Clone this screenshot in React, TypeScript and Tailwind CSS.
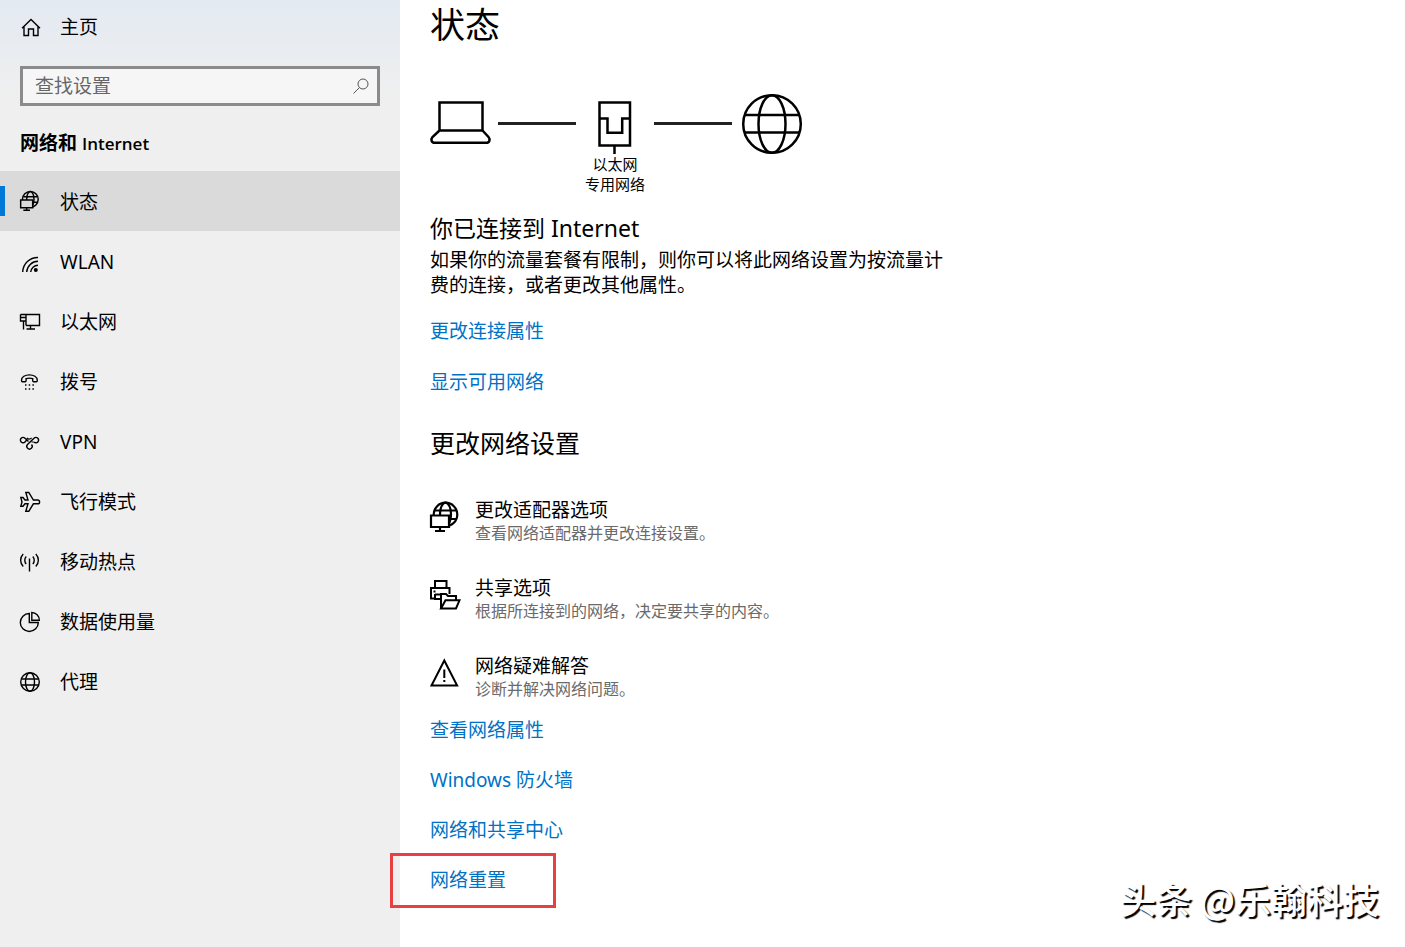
import type { ReactNode } from 'react';

type IconProps = { className?: string; screen?: string };

function Svg({ children, className = 'size-6', width = 1.4, viewBox = '0 0 24 24' }: {
  children: ReactNode;
  className?: string;
  width?: number;
  viewBox?: string;
}) {
  return (
    <svg
      viewBox={viewBox}
      className={`${className} shrink-0 overflow-visible`}
      fill="none"
      stroke="currentColor"
      strokeWidth={width}
      aria-hidden="true"
    >
      {children}
    </svg>
  );
}

function HomeIcon() {
  return (
    <Svg>
      <path d="M4 13.2 13 4.5l9 8.7M6 11.5v9h4.5V14h5v6.500H20v-9" />
    </Svg>
  );
}

function NetworkIcon({ className = 'size-6 p-0.5', screen = '#dadada' }: IconProps) {
  return (
    <Svg className={className} viewBox="0 0 30 30" width={2.2}>
      <circle cx="15.500" cy="12.500" r="11.800" />
      <ellipse cx="15.500" cy="12.500" rx="5.500" ry="11.800" />
      <path d="M5 8.500h21M5 17h21.500" />
      <path d="M1 13.500h18v11.500H1z" fill={screen} />
      <path d="M10 25v4M5 29h10" />
    </Svg>
  );
}

function WlanIcon() {
  return (
    <Svg>
      <path d="M4.700 23A15 15 0 0 1 20 8.500M8.700 23A11.300 11.300 0 0 1 20 12.300M12.700 23A7.500 7.500 0 0 1 20 16.200" />
      <circle cx="17.800" cy="21" r="2" fill="currentColor" stroke="none" />
    </Svg>
  );
}

function EthernetIcon() {
  return (
    <Svg>
      <path d="M2.500 5.500h19v11H8M8 5.500v11M2.500 5.500v6.500H8M2.500 8.500H8M5.500 12v8.500M12.500 16.500V20M8.500 20h8.500" />
    </Svg>
  );
}

function DialIcon() {
  return (
    <Svg>
      <path d="M3.500 11.500c-.4-7.500 16.200-7.500 15.800 0 0 1-.3 1.200-1 1.200h-2.600c-.8 0-1-.4-1-1.200V9.600c-2-.6-4.600-.6-6.600 0v1.900c0 .8-.2 1.200-1 1.200H4.500c-.7 0-1-.2-1-1.200z" />
      <path d="M7 16h1.500M10.700 16h1.500M14.400 16h1.500M7 20h1.500M10.700 20h1.500M14.400 20h1.500" />
    </Svg>
  );
}

function VpnIcon() {
  return (
    <Svg>
      <path d="M10.500 12.500 7 9.200a2.700 2.700 0 1 0 0 3.800c1-1 1.500-2 2.300-3" />
      <path d="M9 8.800c1.200 1.700 3.200 1.700 4.600 0M13.500 13l2.300 0" strokeWidth={1.2} />
      <path d="M13.500 15.500a2.700 2.700 0 1 1-4 0L16 9.200a2.700 2.700 0 1 1 0 3.800" />
    </Svg>
  );
}

function PlaneIcon() {
  return (
    <Svg>
      <path d="M2.800 8.500H5L7 11h3L7.800 3.500h3l4.600 7.500h4.300a1.900 1.900 0 0 1 0 3.800h-4.300l-4.600 7.500h-3L10 14.800H7l-2 2.500H2.800L4 13z" />
    </Svg>
  );
}

function HotspotIcon() {
  return (
    <Svg>
      <path d="M11.500 9.500v13M8.200 7.500c-1.900 2-1.900 5.500 0 7.500M14.800 7.500c1.900 2 1.900 5.500 0 7.500M5.200 5c-3.400 3.500-3.400 9 0 12.500M17.800 5c3.400 3.500 3.400 9 0 12.500" />
    </Svg>
  );
}

function PieIcon() {
  return (
    <Svg>
      <path d="M11.300 4.500a9 9 0 1 0 9 9h-9zM13.800 3.500v7.700h7.500a7.600 7.600 0 0 0-7.500-7.700z" />
    </Svg>
  );
}

function GlobeIcon() {
  return (
    <Svg>
      <circle cx="12" cy="13" r="9.300" />
      <ellipse cx="12" cy="13" rx="4.500" ry="9.300" />
      <path d="M3.300 10h17.400M3.300 16h17.400" />
    </Svg>
  );
}

function ShareIcon() {
  return (
    <Svg className="size-[30px]" viewBox="0 0 30 30" width={2}>
      <path d="M5 8V1h11.500v7M5 18.500H1V8h18.500v6M5 14.500h6M5 14v5h5.500" />
      <path d="M3.500 11.500h2" />
      <path d="M11 28.500V14h5l2 2h8v4.500M11 28.500l4.500-8.200h14L26 28.500z" />
    </Svg>
  );
}

function WarningIcon() {
  return (
    <Svg className="size-[30px]" viewBox="0 0 30 30" width={2}>
      <path d="M14.300 2.500 1.500 27.500h25.600zM14.300 11.500V20M14.300 22v2" />
    </Svg>
  );
}

const navItems = [
  { label: '状态', icon: <NetworkIcon />, active: true },
  { label: 'WLAN', icon: <WlanIcon /> },
  { label: '以太网', icon: <EthernetIcon /> },
  { label: '拨号', icon: <DialIcon /> },
  { label: 'VPN', icon: <VpnIcon /> },
  { label: '飞行模式', icon: <PlaneIcon /> },
  { label: '移动热点', icon: <HotspotIcon /> },
  { label: '数据使用量', icon: <PieIcon /> },
  { label: '代理', icon: <GlobeIcon /> },
];

const settings = [
  { title: '更改适配器选项', desc: '查看网络适配器并更改连接设置。', icon: <NetworkIcon className="size-[30px]" screen="#fff" /> },
  { title: '共享选项', desc: '根据所连接到的网络，决定要共享的内容。', icon: <ShareIcon /> },
  { title: '网络疑难解答', desc: '诊断并解决网络问题。', icon: <WarningIcon /> },
];

function Sidebar() {
  return (
    <aside className="w-[400px] shrink-0 bg-[#efefef] bg-linear-to-b from-[#e3eaf2] via-[#efefef] via-10% to-[#efefef]">
      <a href="#home" className="flex h-[54px] items-center gap-[18px] pl-[18px]">
        <HomeIcon />
        主页
      </a>

      <div className="mx-5 mt-3 flex h-10 items-center border-3 border-[#8b8b8b] bg-[#f6f6f6] pr-2">
        <input
          type="search"
          aria-label="查找设置"
          placeholder="查找设置"
          className="min-w-0 flex-1 bg-transparent pl-3 outline-none placeholder:text-[#666]"
        />
        <button type="button" aria-label="搜索" className="text-[#555]">
          <Svg className="size-4" viewBox="0 0 16 16" width={1}>
            <circle cx="10" cy="6" r="5" />
            <path d="M6.500 9.500.5 15.500" />
          </Svg>
        </button>
      </div>

      <h2 className="mt-6 mb-[15px] h-[26px] pl-5 leading-[26px] font-bold">
        网络和 <span className="font-['Open_Sans'] text-[17px] font-semibold">Internet</span>
      </h2>

      <nav>
        {navItems.map(item => (
          <a
            key={item.label}
            href="#nav"
            aria-current={item.active ? 'page' : undefined}
            className={`relative flex h-[60px] items-center gap-[18px] pl-[18px] ${item.active ? 'bg-[#dadada]' : ''}`}
          >
            {item.active && <span className="absolute left-0 h-[30px] w-[5px] bg-[#0078d7]" />}
            {item.icon}
            <span className="pt-0.5">{item.label}</span>
          </a>
        ))}
      </nav>
    </aside>
  );
}

function Diagram() {
  return (
    <div className="mt-[43px] flex items-start">
      <Svg className="h-[61px] w-[61px]" viewBox="0 0 61 61" width={2.5}>
        <path d="M9.500 9.500h43v28h-43zM9.500 37.500 2.500 44c-2 2.500-1 5.800 2 5.800h52c3 0 4-3.300 2-5.800l-6-6.500" />
      </Svg>
      <div className="mt-[29px] ml-[7px] h-[3px] w-[78px] bg-[#222]" />
      <div className="flex w-[78px] flex-col items-center text-center text-[15px] leading-5">
        <Svg className="h-[61px] w-[36px]" viewBox="0 0 36 61" width={2.5}>
          <path d="M2.500 9.500H33v43H2.500zM2.500 25.500h8v14.200h14.700V25.500H33M17.500 52.500V61" />
        </Svg>
        <span>以太网</span>
        <span>专用网络</span>
      </div>
      <div className="mt-[29px] mr-[10px] h-[3px] w-[78px] bg-[#222]" />
      <Svg className="h-[61px] w-[60px]" viewBox="0 0 60 61" width={2.5}>
        <circle cx="30" cy="31" r="28.800" />
        <ellipse cx="30" cy="31" rx="13.500" ry="28.800" />
        <path d="M2.500 22h55M2.500 39.500h55" />
      </Svg>
    </div>
  );
}

export default function App() {
  return (
    <div className="relative flex min-h-screen bg-white font-['Noto_Sans','Noto_Sans_CJK_SC',sans-serif] text-[19px] text-black">
      <Sidebar />

      <main className="min-w-0 flex-1 pb-10 pl-[30px]">
        <h1 className="text-[35px] leading-[50px]">状态</h1>
        <Diagram />

        <h2 className="mt-[19px] text-[23px] leading-[30px]">你已连接到 Internet</h2>
        <p className="mt-[5px] max-w-[520px] leading-[25px]">
          如果你的流量套餐有限制，则你可以将此网络设置为按流量计费的连接，或者更改其他属性。
        </p>
        <div className="mt-5 flex flex-col items-start gap-[25px] leading-[26px] text-[#0072c6]">
          <a href="#properties">更改连接属性</a>
          <a href="#available">显示可用网络</a>
        </div>

        <h2 className="mt-[30px] text-[25px] leading-9">更改网络设置</h2>
        <div className="mt-[37px] flex flex-col items-start gap-[31px]">
          {settings.map(item => (
            <button key={item.title} type="button" className="flex items-start gap-[15px] text-left">
              <span className="mt-1">{item.icon}</span>
              <span>
                <span className="block leading-6">{item.title}</span>
                <span className="block text-[16px] leading-[23px] text-[#6a6a6a]">{item.desc}</span>
              </span>
            </button>
          ))}
        </div>

        <div className="mt-4 flex flex-col items-start gap-6 leading-[26px] text-[#0072c6]">
          <a href="#view">查看网络属性</a>
          <a href="#firewall">Windows 防火墙</a>
          <a href="#center">网络和共享中心</a>
          <a href="#reset" className="relative">
            网络重置
            <span className="absolute -top-[14px] -left-10 h-[55px] w-[166px] border-3 border-[#e83f43]" />
          </a>
        </div>
      </main>

      <div className="absolute right-[26px] bottom-6 font-['Noto_Sans_CJK_SC',sans-serif] text-[36px] leading-[50px] font-medium text-white [text-shadow:2px_2px_1px_#000]">
        头条 @乐翰科技
      </div>
    </div>
  );
}
